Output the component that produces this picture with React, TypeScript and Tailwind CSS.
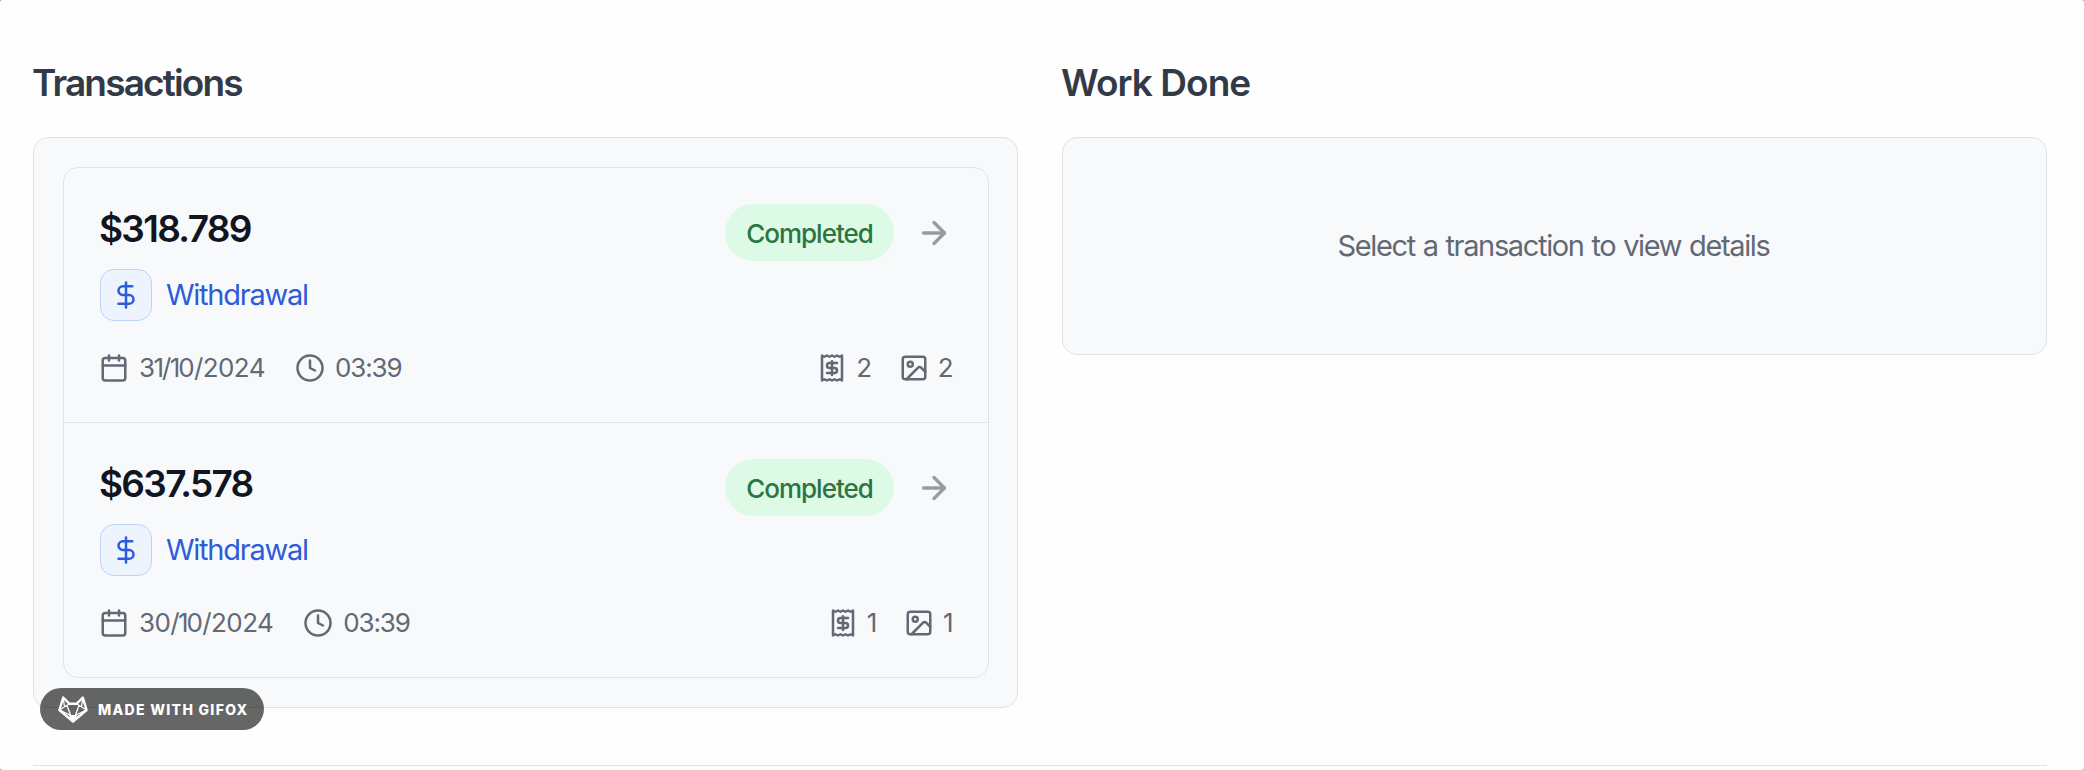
import { ArrowRight, Calendar, Clock, DollarSign, Image, Receipt } from "lucide-react";

type Transaction = {
  amount: string;
  type: string;
  status: string;
  date: string;
  time: string;
  receipts: number;
  images: number;
};

const transactions: Transaction[] = [
  { amount: "$318.789", type: "Withdrawal", status: "Completed", date: "31/10/2024", time: "03:39", receipts: 2, images: 2 },
  { amount: "$637.578", type: "Withdrawal", status: "Completed", date: "30/10/2024", time: "03:39", receipts: 1, images: 1 },
];

// Tightens the space around each "1", the narrowest figure.
function DateText({ value }: { value: string }) {
  return (
    <span className="ml-2.5 tracking-[-0.6px]">
      {value.split(/(1)/).map((part, i) =>
        part === "1" ? (
          <span key={i} className="-ml-px tracking-[-2.1px]">1</span>
        ) : (
          part
        ),
      )}
    </span>
  );
}

function TransactionRow({ t }: { t: Transaction }) {
  return (
    <li className="flex h-[255px] flex-col border-[#dfe3e8] px-9 pt-9 last:h-[254px] not-last:border-b">
      <div className="flex h-[57px] items-center">
        <span className="relative -left-px -top-1 whitespace-nowrap text-[37px] font-semibold leading-none tracking-[-1.7px] text-[#11151f]">{t.amount}</span>
        <span className="ml-auto flex h-[57px] w-[169px] items-center justify-center rounded-full bg-[#dcfae5] pt-px text-[26px] font-medium tracking-[-1px] text-[#2c7440]">{t.status}</span>
        <ArrowRight strokeWidth={2.2} className="ml-[22px] size-9 text-[#969ba3]" />
      </div>
      <div className="mt-2 flex items-center gap-[14px] text-[#2c5bdb]">
        <span className="flex size-[52px] items-center justify-center rounded-[14px] border border-[#b9d4f8] bg-[#edf4fe]">
          <DollarSign className="size-[30px]" />
        </span>
        <span className="pb-px text-[29px] leading-none tracking-[-1.25px]">{t.type}</span>
      </div>
      <div className="mt-8 flex items-center text-[26px] leading-[30px] text-[#626975]">
        <Calendar className="-ml-px size-[30px]" />
        <DateText value={t.date} />
        <Clock className="ml-[30px] size-[30px]" />
        <span className="ml-2.5 tracking-[-1.1px]">{t.time}</span>
        <Receipt className="ml-auto size-[30px]" />
        <span className="ml-[9px] tracking-[-1.5px]">{t.receipts}</span>
        <Image className="ml-7 size-[30px]" />
        <span className="ml-[9px] tracking-[-1.5px]">{t.images}</span>
      </div>
    </li>
  );
}

function FoxLogo() {
  return (
    <svg className="h-[27px] w-[30px]" viewBox="0 0 30 27" fill="none" stroke="#fff" strokeLinejoin="round">
      <path strokeWidth="2.4" d="M5.200 1.500 11.500 7.800h7l6.300-6.300L28.600 14 15 25.500 1.400 14Z" />
      <path strokeWidth="1.3" d="M11.500 7.800 1.400 14l10.600 5 3 6 3-6 10.600-5L18.500 7.800M5.200 1.500 6.500 11M24.800 1.500 23.500 11M9 9.500l3.500 9.500M21 9.500 17.500 19" />
      <path strokeWidth="1" fill="#fff" d="M11.500 19.500h7L15 25.500Z" />
    </svg>
  );
}

export default function App() {
  return (
    <div className="h-[770px] w-[2084px] bg-[#8a8a8a] font-['Inter',sans-serif]">
      <div className="relative h-full overflow-hidden rounded-[2px] bg-[#fefefe] px-[33px] pt-[60px]">
        <main className="grid grid-cols-[985px_985px] items-start gap-x-11">
          <section>
            <h2 className="-ml-px h-[77px] whitespace-nowrap text-[37px] font-semibold leading-[46px] tracking-[-1.85px] text-[#323a47]">Transactions</h2>
            <div className="h-[571px] rounded-[15px] border border-[#dfe3e8] bg-[#f8f9fb] py-[29px] pl-[29px] pr-7">
              <ul className="rounded-[15px] border border-[#dfe3e8]">
                {transactions.map((t) => (
                  <TransactionRow key={t.date} t={t} />
                ))}
              </ul>
            </div>
          </section>
          <section>
            <h2 className="-ml-px h-[77px] whitespace-nowrap text-[37px] font-semibold leading-[46px] tracking-[-0.95px] text-[#323a47]">Work Done</h2>
            <div className="flex h-[218px] items-center justify-center rounded-[15px] border border-[#dfe3e8] bg-[#f8f9fb]">
              <p className="pr-0.5 text-[29px] tracking-[-1.35px] text-[#626975] [word-spacing:1px]">Select a transaction to view details</p>
            </div>
          </section>
        </main>
        <hr className="mt-[57px] w-[2014px] border-[#dfe3e8]" />
        <div className="absolute left-10 top-[688px] flex h-[42px] w-[224px] items-center whitespace-nowrap rounded-full bg-black/60 pl-[18px] text-[14px] font-extrabold tracking-[1.3px] text-white">
          <FoxLogo />
          <span className="ml-[10px]">MADE WITH GIFOX</span>
        </div>
      </div>
    </div>
  );
}
